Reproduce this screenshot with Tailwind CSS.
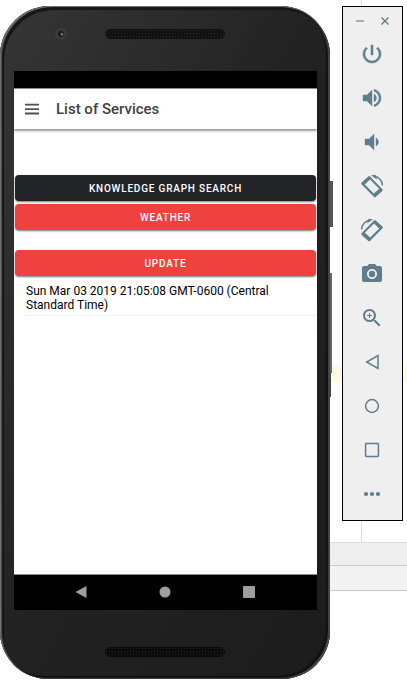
<!DOCTYPE html>
<html lang="en">
<head>
<meta charset="utf-8">
<meta name="viewport" content="width=device-width, initial-scale=1">
<title>List of Services</title>
<script src="https://cdn.jsdelivr.net/npm/@tailwindcss/browser@4"></script>
</head>
<body class="relative flex min-h-screen gap-3 overflow-hidden bg-white pt-1.5 pr-1 pb-1 font-[Roboto,sans-serif]">

  <!-- Editor window behind the emulator -->
  <div class="absolute inset-0 -z-10 flex flex-col" aria-hidden="true">
    <div class="relative h-[542px]">
      <div class="absolute inset-y-0 right-[45px] w-px bg-[#dcdcdc]"></div>
      <div class="absolute inset-x-0 top-[365px] h-[17px] bg-[#fffae3]"></div>
    </div>
    <div class="h-6 border-y border-t-[#dcdcdc] border-b-[#c8c8c8] bg-[#efefef]"></div>
    <div class="h-[25px] border-b border-[#c8c8c8] bg-[#f3f3f3]"></div>
  </div>

  <!-- Phone -->
  <main class="relative flex flex-1 flex-col rounded-t-[50px] rounded-b-[48px] bg-linear-to-br from-[#363636] via-[#222222] to-[#1c1c1c] pr-[13px] pl-3.5 shadow-[inset_1px_1px_0_#707070,inset_2px_1px_1px_#555555,inset_-2px_-1px_1px_#48484a,inset_4px_4px_1px_#161616,inset_-4px_-3px_1px_#101010]">
    <div class="absolute top-[175px] -right-[3px] h-[46px] w-[3px] bg-[#555555]"></div>
    <div class="absolute top-[267px] -right-[2px] h-[100px] w-[2px] bg-[#686565]"></div>
    <div class="absolute top-[367px] -right-px h-6 w-px bg-[#444444]"></div>

    <div class="relative flex h-[65px] items-start justify-center pt-[23px] pr-0.5">
      <div class="absolute top-[22px] left-[41px] flex size-3 items-center justify-center rounded-full bg-[#3b3b3b]">
        <div class="size-1.5 rounded-full bg-[radial-gradient(circle_at_65%_55%,#75617c_0_1px,#17171c_2px)]"></div>
      </div>
      <div class="h-2.5 w-[120px] rounded-full bg-[#111111] bg-[radial-gradient(#292929_1px,transparent_1px)] bg-size-[3px_3px]"></div>
    </div>

    <div class="flex flex-1 flex-col bg-white">
      <div class="h-[18px] border-b border-[#8a8a8a] bg-black"></div>
      <header class="flex h-10 items-center gap-4 bg-white px-2.5 shadow-[0_2px_2px_#0006]">
        <button type="button" aria-label="Menu" class="flex w-4 justify-center">
          <svg class="h-3 w-4 shrink-0" viewBox="0 0 16 12" fill="#515151"><path d="M1 .7h14v1.800H1zM1 5.200h14v1.700H1zM1 9.600h14v1.800H1z"/></svg>
        </button>
        <h1 class="text-[15px] font-medium text-[#424242]">List of Services</h1>
      </header>

      <div class="flex flex-1 flex-col px-px pt-[46px]">
        <button type="button" class="h-[26px] rounded-sm bg-[#222428] text-[10px] font-medium tracking-[0.08em] text-white uppercase shadow-[0_1px_2px_#0008]">Knowledge Graph Search</button>
        <button type="button" class="mt-[3px] h-[26px] rounded-sm bg-[#f04141] text-[10px] font-medium tracking-[0.08em] text-white uppercase shadow-[0_1px_2px_#0008]">Weather</button>
        <button type="button" class="mt-5 h-[26px] rounded-sm bg-[#f04141] text-[10px] font-medium tracking-[0.08em] text-white uppercase shadow-[0_1px_2px_#0008]">Update</button>
        <p class="-mr-px ml-[11px] border-b border-[#f3f3f3] pt-2 pr-9 pb-[3px] text-[12px] leading-[14px] text-black">Sun Mar 03 2019 21:05:08 GMT-0600 (Central Standard Time)</p>
      </div>

      <nav class="flex h-9 items-center justify-center gap-[72px] border-t border-[#838a87] bg-black pr-0.5 pb-0.5">
        <button type="button" aria-label="Back"><svg class="size-3" viewBox="0 0 12 12" fill="#9e9e9e"><path d="M11.5 0v12L.5 6z"/></svg></button>
        <button type="button" aria-label="Home"><svg class="size-3" viewBox="0 0 12 12" fill="#9e9e9e"><circle cx="6" cy="6" r="5.5"/></svg></button>
        <button type="button" aria-label="Recent apps"><svg class="size-3" viewBox="0 0 12 12" fill="#9e9e9e"><rect width="12" height="12" rx=".7"/></svg></button>
      </nav>
    </div>

    <div class="flex h-[69px] items-start justify-center pt-[37px] pr-0.5">
      <div class="h-2.5 w-[120px] rounded-full bg-[#0b0b0b] bg-[radial-gradient(#242424_1px,transparent_1px)] bg-size-[3px_3px]"></div>
    </div>
  </main>

  <!-- Emulator controls -->
  <aside class="flex w-[61px] flex-col self-start border border-black bg-[#efefef] pr-px pb-1 text-[#607d8b]">
    <div class="flex h-[25px] items-center justify-center gap-[13px] pt-[3px]">
      <button type="button" aria-label="Minimize"><svg class="size-3" viewBox="0 0 12 12" fill="none" stroke="#a2b2ba" stroke-width="2"><path d="M2 6h8"/></svg></button>
      <button type="button" aria-label="Close"><svg class="size-3" viewBox="0 0 12 12" fill="none" stroke="currentColor" stroke-width="1.4"><path d="M2.5 2.5l7 7m0-7l-7 7"/></svg></button>
    </div>
    <button type="button" aria-label="Power" class="flex h-11 items-center justify-center"><svg class="size-6" viewBox="0 0 24 24" fill="currentColor"><path d="M13 3h-2v10h2V3zm4.830 2.170l-1.420 1.420C17.990 7.860 19 9.810 19 12c0 3.870-3.130 7-7 7s-7-3.130-7-7c0-2.190 1.010-4.140 2.580-5.420L6.170 5.170C4.230 6.820 3 9.260 3 12c0 4.970 4.030 9 9 9s9-4.030 9-9c0-2.740-1.230-5.180-3.170-6.830z" stroke="currentColor" stroke-width=".5"/></svg></button>
    <button type="button" aria-label="Volume up" class="flex h-11 items-center justify-center"><svg class="size-6" viewBox="0 0 24 24" fill="currentColor" stroke="currentColor" stroke-width=".4"><path d="M3 9v6h4l5 5V4L7 9H3zm13.500 3c0-1.770-1.020-3.290-2.500-4.030v8.050c1.480-.73 2.500-2.250 2.500-4.020zM14 3.230v2.060c2.890.86 5 3.540 5 6.710s-2.110 5.850-5 6.710v2.060c4.010-.91 7-4.490 7-8.770s-2.990-7.860-7-8.770z"/></svg></button>
    <button type="button" aria-label="Volume down" class="flex h-11 items-center justify-center"><svg class="size-6" viewBox="0 0 24 24" fill="currentColor" stroke="currentColor" stroke-width=".4"><path d="M18.500 12c0-1.770-1.020-3.290-2.500-4.030v8.050c1.480-.73 2.500-2.250 2.500-4.020zM5 9v6h4l5 5V4L9 9H5z"/></svg></button>
    <button type="button" aria-label="Rotate left" class="flex h-11 items-center justify-center"><svg class="size-6" viewBox="0 0 24 24"><path fill="currentColor" fill-rule="evenodd" d="M8.300 2.500Q9.200 1.700 10.100 2.600L22.400 15.300Q23.200 16.200 22.300 17L15.700 23Q14.800 23.800 14 23L1.500 10.200Q.7 9.400 1.600 8.500zM10 5.400L4.800 10.400 13.800 19.600 19.200 14.700z"/><path fill="none" stroke="currentColor" stroke-width="1.400" d="M13.500 2.300C18.500 2.300 22.200 6.500 22.500 11.500"/><path fill="currentColor" d="M11 1.200L15.500.8 17 5.500z"/></svg></button>
    <button type="button" aria-label="Rotate right" class="flex h-11 items-center justify-center"><svg class="size-6 -scale-x-100" viewBox="0 0 24 24"><path fill="currentColor" fill-rule="evenodd" d="M8.300 2.500Q9.200 1.700 10.100 2.600L22.400 15.300Q23.200 16.200 22.300 17L15.700 23Q14.800 23.800 14 23L1.500 10.200Q.7 9.400 1.600 8.500zM10 5.400L4.800 10.400 13.800 19.600 19.200 14.700z"/><path fill="none" stroke="currentColor" stroke-width="1.400" d="M13.500 2.300C18.500 2.300 22.200 6.500 22.500 11.500"/><path fill="currentColor" d="M11 1.200L15.500.8 17 5.500z"/></svg></button>
    <button type="button" aria-label="Take screenshot" class="flex h-11 items-center justify-center"><svg class="size-6" viewBox="0 0 24 24" fill="currentColor"><circle cx="12" cy="12" r="3.200"/><path d="M9 2L7.170 4H4c-1.100 0-2 .9-2 2v12c0 1.100.9 2 2 2h16c1.100 0 2-.9 2-2V6c0-1.100-.9-2-2-2h-3.170L15 2H9zm3 15c-2.760 0-5-2.240-5-5s2.240-5 5-5 5 2.240 5 5-2.240 5-5 5z"/></svg></button>
    <button type="button" aria-label="Zoom" class="flex h-11 items-center justify-center"><svg class="size-6" viewBox="0 0 24 24" fill="currentColor"><path d="M15.500 14h-.79l-.28-.27C15.410 12.590 16 11.110 16 9.500 16 5.910 13.090 3 9.500 3S3 5.910 3 9.500 5.910 16 9.500 16c1.610 0 3.090-.59 4.230-1.570l.27.28v.79l5 4.990L20.490 19l-4.990-5zm-6 0C7.010 14 5 11.990 5 9.500S7.010 5 9.500 5 14 7.010 14 9.500 11.990 14 9.500 14z"/><path d="M12 10h-2v2H9v-2H7V9h2V7h1v2h2v1z"/></svg></button>
    <button type="button" aria-label="Back" class="flex h-11 items-center justify-center"><svg class="size-6" viewBox="0 0 24 24" fill="none" stroke="currentColor" stroke-width="1.500"><path d="M18 5.500v13L6.700 12z"/></svg></button>
    <button type="button" aria-label="Home" class="flex h-11 items-center justify-center"><svg class="size-6" viewBox="0 0 24 24" fill="none" stroke="currentColor" stroke-width="1.500"><circle cx="12" cy="12" r="6.400"/></svg></button>
    <button type="button" aria-label="Overview" class="flex h-11 items-center justify-center"><svg class="size-6" viewBox="0 0 24 24" fill="none" stroke="currentColor" stroke-width="1.500"><rect x="5.600" y="5.600" width="12.800" height="12.800" rx=".6"/></svg></button>
    <button type="button" aria-label="More" class="flex h-11 items-center justify-center"><svg class="size-6" viewBox="0 0 24 24" fill="currentColor"><circle cx="6" cy="12" r="2.100"/><circle cx="12" cy="12" r="2.100"/><circle cx="18" cy="12" r="2.100"/></svg></button>
  </aside>
</body>
</html>
